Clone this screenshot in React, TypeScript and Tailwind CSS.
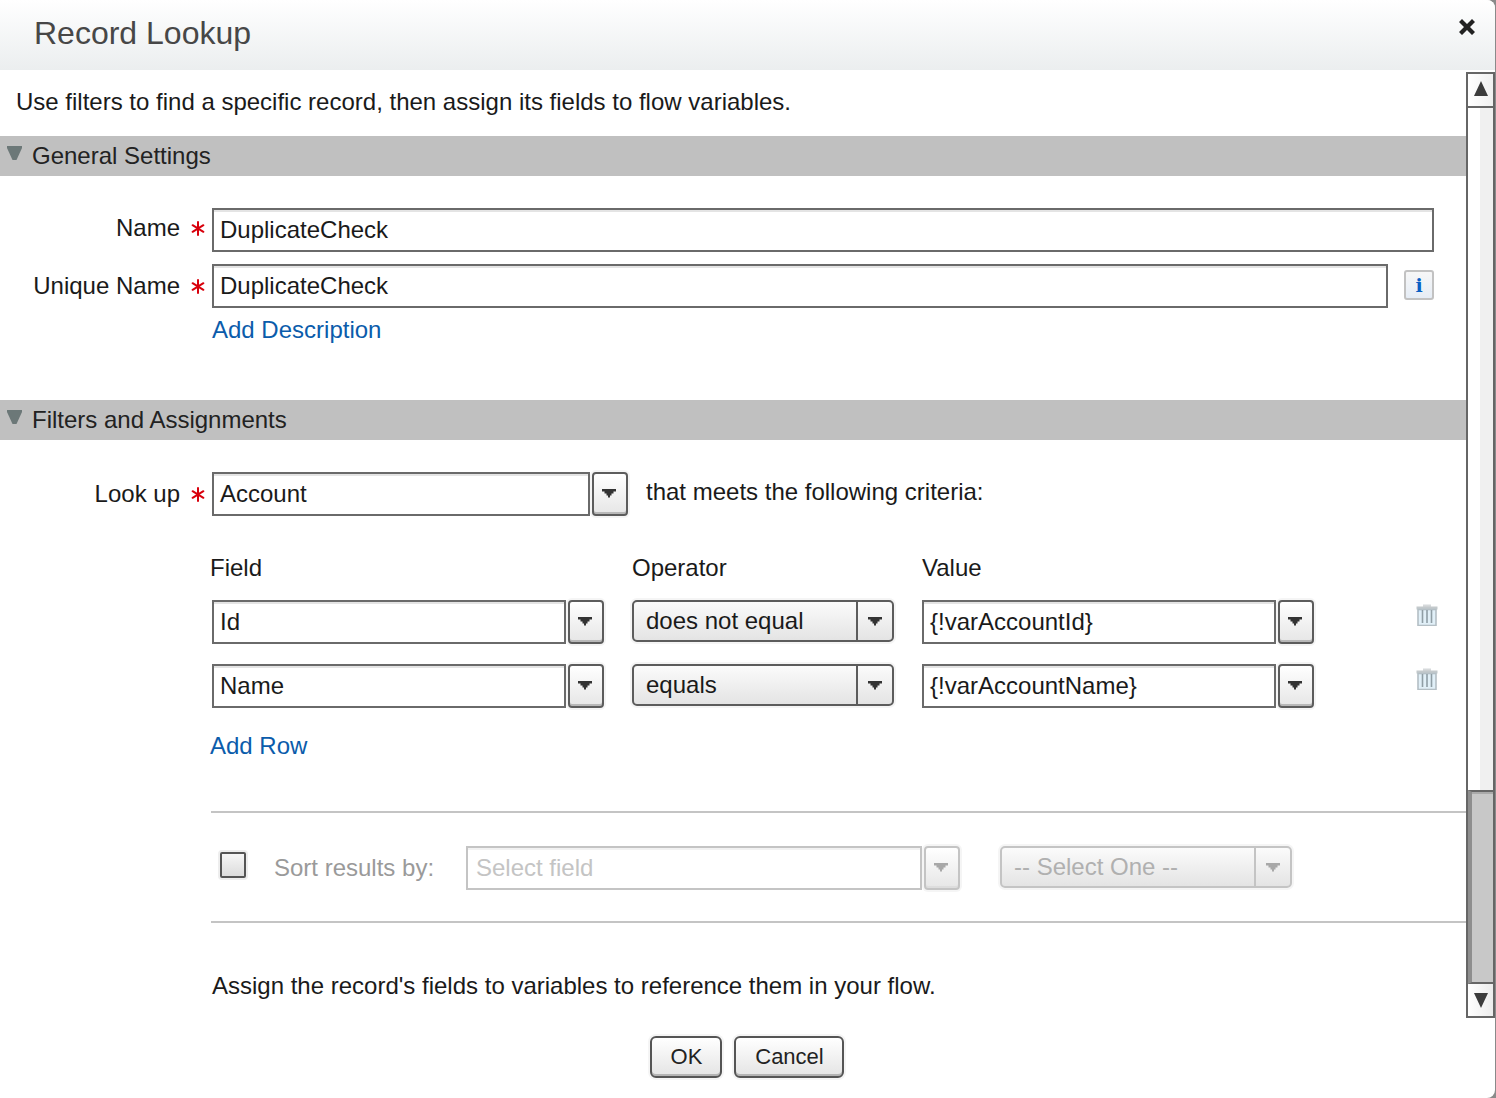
import React from "react";

const Arrow = ({ muted = false }: { muted?: boolean }) => (
  <svg width="14" height="9" viewBox="0 0 14 9" className="block">
    <path d="M0 0H14V2.5H11.5V4.5H9.5V6.5H8V8.5H6V6.5H4.5V4.5H2.5V2.5H0Z" fill={muted ? "#a8a8a8" : "#333333"} />
  </svg>
);

const Star = () => (
  <svg width="14" height="15" viewBox="0 0 14 15" className="block">
    <g stroke="#d8000c" strokeWidth="2" strokeLinecap="round">
      <path d="M7 1V14" />
      <path d="M1.6 4.2L12.4 10.8" />
      <path d="M12.4 4.2L1.6 10.8" />
    </g>
  </svg>
);

const Trash = () => (
  <svg width="22" height="22" viewBox="0 0 22 22" className="block">
    <rect x="7" y="0.5" width="8" height="2.5" fill="#d6d9db" />
    <rect x="0.5" y="2.5" width="21" height="3" fill="#c3c9cc" />
    <rect x="2" y="5.5" width="18" height="16" fill="#e1f0f8" stroke="#b4bfc5" strokeWidth="1.6" />
    <g stroke="#8f9ea5" strokeWidth="1.6">
      <path d="M6.5 6V19" />
      <path d="M11 6V19" />
      <path d="M15.5 6V19" />
    </g>
  </svg>
);

const TextBox = ({
  value,
  className,
  muted = false,
}: {
  value: string;
  className: string;
  muted?: boolean;
}) => (
  <div
    className={`h-[44px] flex items-center border-2 ${
      muted
        ? "border-[#c4c4c4] text-[#c4c4c4] shadow-[inset_0_2px_0_#f2f2f2] pl-[8px]"
        : "border-[#6a6a6a] text-[#1a1a1a] shadow-[inset_0_2px_0_#e4e4e4] pl-[6px]"
    } ${className}`}
  >
    {value}
  </div>
);

const DropButton = ({ muted = false }: { muted?: boolean }) => (
  <div
    className={`w-[36px] h-[44px] ml-[2px] rounded-[4px] border-2 flex items-center justify-center pb-[2px] pr-[2px] bg-gradient-to-b from-white to-[#e6e6e6] ${
      muted
        ? "border-[#c4c4c4] shadow-[0_0_0_2px_#f5f5f5,inset_0_-2px_0_#dddddd]"
        : "border-[#5c5c5c] shadow-[0_0_0_2px_#f5f5f5,inset_0_-2px_0_#b8b8b8]"
    }`}
  >
    <Arrow muted={muted} />
  </div>
);

const Select = ({
  value,
  className,
  muted = false,
}: {
  value: string;
  className: string;
  muted?: boolean;
}) => (
  <div
    className={`h-[42px] flex rounded-[5px] border-2 bg-gradient-to-b from-[#fbfbfb] to-[#e4e4e4] shadow-[0_0_0_2px_#f5f5f5] ${
      muted ? "border-[#c4c4c4] text-[#b0b0b0]" : "border-[#5c5c5c] text-[#1a1a1a]"
    } ${className}`}
  >
    <div className="flex-1 flex items-center pl-[12px]">{value}</div>
    <div
      className={`w-[36px] flex items-center justify-center border-l-2 ${
        muted ? "border-[#c4c4c4]" : "border-[#5c5c5c]"
      }`}
    >
      <Arrow muted={muted} />
    </div>
  </div>
);

const Section = ({ title }: { title: string }) => (
  <div className="h-[40px] bg-[#c0c0c0] flex items-center text-[#222222] relative pl-[32px]">
    <svg width="15" height="14" viewBox="0 0 15 14" className="absolute left-[7px] top-[10px]">
      <path d="M0 0H15V2L9.5 14H5.5L0 2Z" fill="#6c7878" />
    </svg>
    {title}
  </div>
);

const Label = ({ text, pt }: { text: string; pt: string }) => (
  <div className={`w-[212px] shrink-0 flex justify-end items-start ${pt}`}>
    <span className="text-[#1a1a1a] leading-[28px]">{text}</span>
    <span className="ml-[11px] mr-[7px] mt-[7px]">
      <Star />
    </span>
  </div>
);

const FilterRow = ({ field, op, value, top }: { field: string; op: string; value: string; top: string }) => (
  <div className={`flex items-start pl-[212px] ${top}`}>
    <TextBox value={field} className="w-[354px]" />
    <DropButton />
    <Select value={op} className="w-[262px] ml-[28px]" />
    <TextBox value={value} className="w-[354px] ml-[28px]" />
    <DropButton />
    <div className="ml-[102px] mt-[4px]">
      <Trash />
    </div>
  </div>
);

export default function App() {
  return (
    <div className="w-[1496px] h-[1098px] bg-[#8a8a8a] overflow-hidden">
      <div
        className="w-[1495px] h-[1098px] bg-white rounded-tr-[8px] rounded-br-[8px] flex flex-col overflow-hidden text-[24px] leading-[28px]"
        style={{ fontFamily: '"Liberation Sans", Arial, sans-serif' }}
      >
        <div className="h-[70px] shrink-0 bg-gradient-to-b from-white to-[#ebeeef] flex justify-between pl-[34px] pr-[20px]">
          <div className="text-[32px] leading-[66px] text-[#474747]">Record Lookup</div>
          <svg width="16" height="16" viewBox="0 0 16 16" className="mt-[19px]">
            <path d="M0 3L3 0L8 5L13 0L16 3L11 8L16 13L13 16L8 11L3 16L0 13L5 8Z" fill="#222222" />
          </svg>
        </div>

        <div className="h-[948px] shrink-0 flex">
          <div className="w-[1466px] shrink-0">
            <div className="h-[66px] flex items-center pl-[16px] pb-[2px] text-[#1a1a1a]">
              Use filters to find a specific record, then assign its fields to flow variables.
            </div>
            <Section title="General Settings" />
            <div className="h-[224px] pt-[32px]">
              <div className="flex">
                <Label text="Name" pt="pt-[6px]" />
                <TextBox value="DuplicateCheck" className="w-[1222px]" />
              </div>
              <div className="flex mt-[12px]">
                <Label text="Unique Name" pt="pt-[8px]" />
                <TextBox value="DuplicateCheck" className="w-[1176px]" />
                <div className="w-[30px] h-[30px] ml-[16px] mt-[6px] rounded-[3px] border-2 border-[#c2c2c2] bg-gradient-to-b from-[#f7f7f7] to-[#e6edf6] flex items-center justify-center font-bold text-[#0a5fc4] text-[19px] leading-none" style={{ fontFamily: '"DejaVu Serif", serif' }}>
                  i
                </div>
              </div>
              <div className="pl-[212px] mt-[8px] text-[#0b5cab]">Add Description</div>
            </div>
            <Section title="Filters and Assignments" />
            <div className="flex pt-[32px]">
              <Label text="Look up" pt="pt-[8px]" />
              <TextBox value="Account" className="w-[378px]" />
              <DropButton />
              <div className="ml-[18px] pt-[6px] text-[#1a1a1a]">that meets the following criteria:</div>
            </div>
            <div className="flex mt-[38px] h-[28px] pl-[210px] text-[#1a1a1a]">
              <div className="w-[422px]">Field</div>
              <div className="w-[290px]">Operator</div>
              <div>Value</div>
            </div>
            <FilterRow top="mt-[18px]" field="Id" op="does not equal" value="{!varAccountId}" />
            <FilterRow top="mt-[20px]" field="Name" op="equals" value="{!varAccountName}" />
            <div className="pl-[210px] mt-[24px] text-[#0b5cab]">Add Row</div>
            <div className="ml-[211px] mt-[51px] h-[2px] bg-[#c4c4c4]" />
            <div className="flex items-start pt-[33px] h-[108px]">
              <div className="w-[26px] h-[26px] ml-[220px] mt-[6px] rounded-[2px] border-2 border-[#555555] bg-gradient-to-b from-[#f6f6f6] to-[#dcdcdc] shadow-[0_0_0_2px_#eeeeee]" />
              <div className="ml-[28px] w-[192px] pt-[8px] text-[#9a9a9a]">Sort results by:</div>
              <TextBox value="Select field" muted className="w-[456px]" />
              <DropButton muted />
              <Select value="-- Select One --" muted className="w-[292px] ml-[40px]" />
            </div>
            <div className="ml-[211px] h-[2px] bg-[#c4c4c4]" />
            <div className="pl-[212px] mt-[49px] text-[#1a1a1a]">
              Assign the record's fields to variables to reference them in your flow.
            </div>
          </div>

          <div className="w-[29px] h-[946px] mt-[2px] shrink-0 border-2 border-[#666666] flex flex-col">
            <div className="h-[34px] shrink-0 border-b-2 border-[#666666] pb-[3px] bg-gradient-to-r from-white to-[#f0f0f0] flex items-center justify-center">
              <svg width="14" height="15" viewBox="0 0 14 15"><path d="M7 0L14 15H0Z" fill="#3c3c3c" /></svg>
            </div>
            <div className="flex-1 bg-gradient-to-r from-white from-50% to-[#f0f0f0] to-50%" />
            <div className="h-[194px] shrink-0 border-y-2 border-[#666666] bg-[#c8c8c8] border-l-4 border-l-[#8e8e8e] shadow-[inset_0_2px_0_#aaaaaa]" />
            <div className="h-[32px] shrink-0 bg-gradient-to-r from-white to-[#ececec] flex items-center justify-center">
              <svg width="14" height="15" viewBox="0 0 14 15"><path d="M0 0H14L7 15Z" fill="#3c3c3c" /></svg>
            </div>
          </div>
        </div>

        <div className="flex-1 flex justify-center items-start pt-[18px] pr-[2px] gap-[12px] text-[#222222] text-[22px]">
          <div className="w-[72px] h-[42px] pl-[2px] rounded-[6px] border-2 border-[#555555] bg-gradient-to-b from-white to-[#e4e4e4] shadow-[0_0_0_2px_#f5f5f5,inset_0_-2px_0_#b4b4b4] flex items-center justify-center">OK</div>
          <div className="w-[110px] h-[42px] pl-[2px] rounded-[6px] border-2 border-[#555555] bg-gradient-to-b from-white to-[#e4e4e4] shadow-[0_0_0_2px_#f5f5f5,inset_0_-2px_0_#b4b4b4] flex items-center justify-center">Cancel</div>
        </div>
      </div>
    </div>
  );
}
